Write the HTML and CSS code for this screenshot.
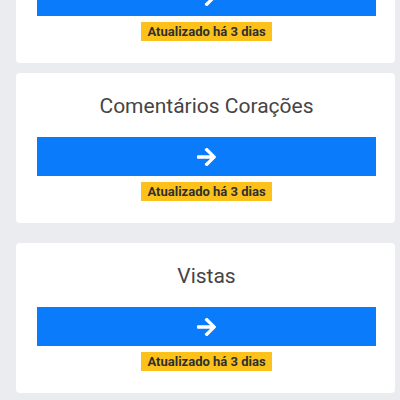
FILE: index.html
```html
<!DOCTYPE html>
<html>
<head>
<meta charset="utf-8">
<link rel="stylesheet" href="styles.css">
</head>
<body>
<div class="list">
  <div class="card card-first">
    <div class="title"></div>
    <div class="btn"><svg class="arrow" viewBox="0 44 448 424"><path d="M190.5 66.9l22.2-22.2c9.4-9.4 24.6-9.4 33.9 0L441 239c9.4 9.4 9.4 24.6 0 33.9L246.6 467.3c-9.4 9.4-24.6 9.4-33.9 0l-22.2-22.2c-9.5-9.5-9.3-25 .4-34.3L311.4 296H24c-13.3 0-24-10.7-24-24v-32c0-13.3 10.7-24 24-24h287.4L190.9 101.2c-9.8-9.3-10-24.8-.4-34.3z"/></svg></div>
    <span class="badge">Atualizado há 3 dias</span>
  </div>
  <div class="card card-second">
    <div class="title">Comentários Corações</div>
    <div class="btn"><svg class="arrow" viewBox="0 44 448 424"><path d="M190.5 66.9l22.2-22.2c9.4-9.4 24.6-9.4 33.9 0L441 239c9.4 9.4 9.4 24.6 0 33.9L246.6 467.3c-9.4 9.4-24.6 9.4-33.9 0l-22.2-22.2c-9.5-9.5-9.3-25 .4-34.3L311.4 296H24c-13.3 0-24-10.7-24-24v-32c0-13.3 10.7-24 24-24h287.4L190.9 101.2c-9.8-9.3-10-24.8-.4-34.3z"/></svg></div>
    <span class="badge">Atualizado há 3 dias</span>
  </div>
  <div class="card">
    <div class="title">Vistas</div>
    <div class="btn"><svg class="arrow" viewBox="0 44 448 424"><path d="M190.5 66.9l22.2-22.2c9.4-9.4 24.6-9.4 33.9 0L441 239c9.4 9.4 9.4 24.6 0 33.9L246.6 467.3c-9.4 9.4-24.6 9.4-33.9 0l-22.2-22.2c-9.5-9.5-9.3-25 .4-34.3L311.4 296H24c-13.3 0-24-10.7-24-24v-32c0-13.3 10.7-24 24-24h287.4L190.9 101.2c-9.8-9.3-10-24.8-.4-34.3z"/></svg></div>
    <span class="badge">Atualizado há 3 dias</span>
  </div>
</div>
</body>
</html>
```

FILE: styles.css
```css
html, body {
  margin: 0;
  padding: 0;
  background: #ebecf0;
  font-family: Roboto, "Liberation Sans", sans-serif;
  overflow: hidden;
}
.list {
  display: flex;
  flex-direction: column;
  margin-top: -87px;
  padding-left: 16px;
}
.card {
  width: 379px;
  height: 150px;
  box-sizing: border-box;
  background: #ffffff;
  border-radius: 4px;
  padding: 21px 19px 0 21px;
  display: flex;
  flex-direction: column;
  align-items: center;
  margin-bottom: 20px;
}
.card-first {
  margin-bottom: 10px;
}
.title {
  font-size: 21px;
  line-height: 25px;
  color: #454545;
  height: 25px;
}
.btn {
  margin-top: 18px;
  width: 100%;
  height: 39px;
  background: #0a7cfb;
  display: flex;
  align-items: center;
  justify-content: center;
}
.arrow {
  width: 19px;
  height: 18px;
  fill: #ffffff;
}
.badge {
  margin-top: 6px;
  height: 19px;
  line-height: 19px;
  padding: 0 6px;
  background: #fcc21b;
  color: #2f2f2f;
  font-size: 13px;
  font-weight: 700;
}
```
